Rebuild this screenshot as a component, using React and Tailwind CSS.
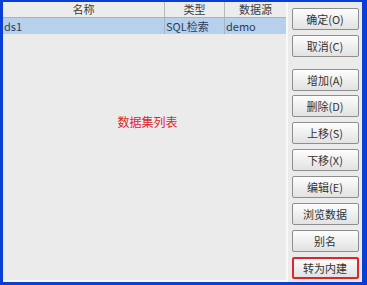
const buttons = [
  { label: '确定(O)', mt: 'mt-0' },
  { label: '取消(C)', mt: 'mt-[5px]' },
  { label: '增加(A)', mt: 'mt-[12px]' },
  { label: '删除(D)', mt: 'mt-[4px]' },
  { label: '上移(S)', mt: 'mt-[5px]' },
  { label: '下移(X)', mt: 'mt-[5px]' },
  { label: '编辑(E)', mt: 'mt-[5px]' },
  { label: '浏览数据', mt: 'mt-[5px]' },
  { label: '别名', mt: 'mt-[5px]' },
  { label: '转为内建', mt: 'mt-[5px]', active: true },
];

function Btn({ label, active, mt }) {
  return (
    <button
      className={`${mt} block h-[22px] w-[67px] shrink-0 rounded-[2px] border bg-gradient-to-b from-[#fdfdfd] to-[#e2e2e2] p-0 text-[11px] leading-none text-[#333] ${
        active ? 'border-2 border-[#e0242b]' : 'border-[#8e8e8e]'
      }`}
    >
      {label}
    </button>
  );
}

export default function App() {
  return (
    <div
      className="flex h-[285px] w-[367px] flex-col overflow-hidden bg-[#0a3fd6] pt-[2px] pl-[3px] pr-[5px] pb-[3px]"
      style={{ fontFamily: '"Noto Sans CJK SC", "Liberation Sans", sans-serif' }}
    >
      <div className="flex min-h-0 flex-1 bg-[#ebebeb]">
        {/* Table */}
        <div className="flex w-[285px] flex-col border-r-2 border-b-2 border-[#f8f8f8] pb-[1px]">
          <div className="flex h-[16px] border-b border-[#b0b0b0] bg-[#ececec] text-[11px] leading-[15px] text-[#3a3a3a]">
            <div className="w-[162px] border-r border-[#b8b8b8] text-center">名称</div>
            <div className="w-[60px] border-r border-[#b8b8b8] text-center">类型</div>
            <div className="flex-1 text-center">数据源</div>
          </div>
          <div className="flex h-[16px] bg-[#b7d0ec] text-[11px] leading-[16px] text-[#2a3c5a]">
            <div className="w-[162px] border-r border-[#9fb5d0] pl-[1px]">ds1</div>
            <div className="w-[60px] border-r border-[#9fb5d0] pl-[1px]">SQL检索</div>
            <div className="flex-1 pl-[1px]">demo</div>
          </div>
          <div className="flex flex-1 items-center justify-center pb-[69px] pl-[6px] text-[12px] text-[#e0242b]">
            数据集列表
          </div>
        </div>
        {/* Buttons */}
        <div className="flex flex-1 flex-col items-center pt-[6px]">
          {buttons.map((b) => (
            <Btn key={b.label} label={b.label} active={b.active} mt={b.mt} />
          ))}
        </div>
      </div>
    </div>
  );
}
